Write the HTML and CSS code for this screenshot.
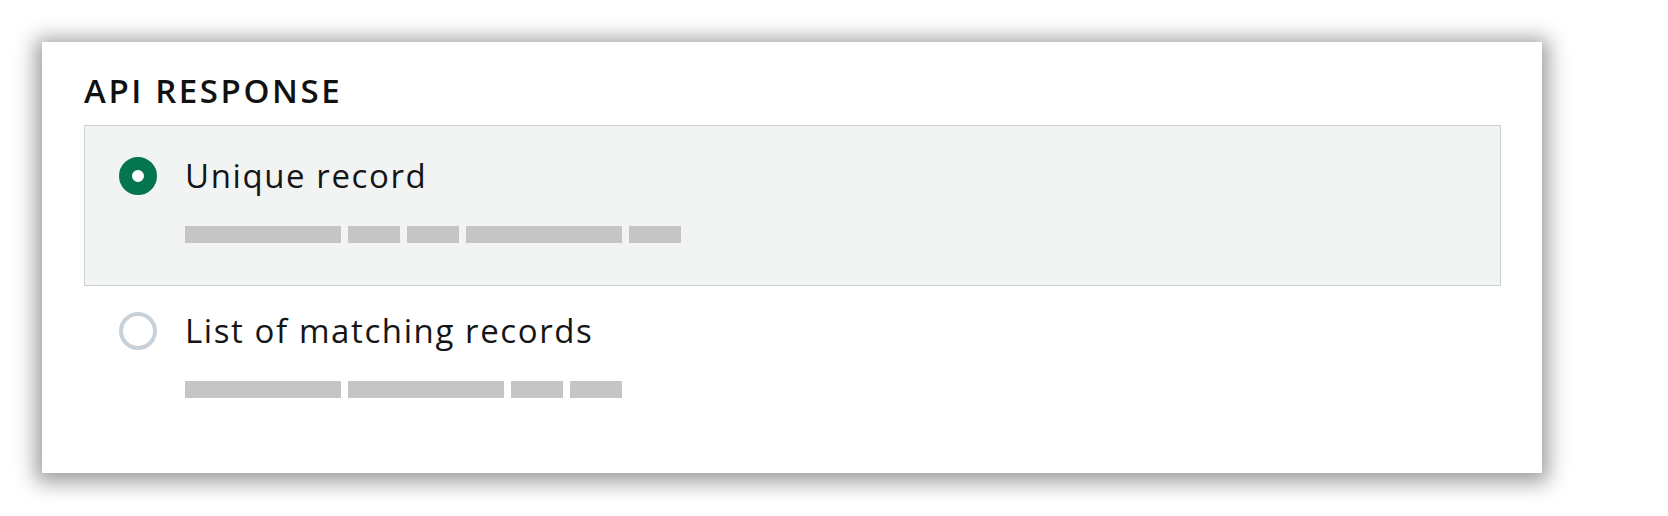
FILE: index.html
```html
<!DOCTYPE html>
<html>
<head>
  <title>API Response</title>
  <link rel="stylesheet" href="styles.css">
</head>
<body>
  <div class="panel">
    <h2 class="panel-title">API RESPONSE</h2>

    <!-- Opciones de respuesta -->
    <div class="option option-selected">
      <span class="radio radio-on"></span>
      <div class="option-body">
        <div class="option-label">Unique record</div>
        <div class="skeleton">
          <span class="bar bar-long"></span>
          <span class="bar bar-short"></span>
          <span class="bar bar-short"></span>
          <span class="bar bar-long"></span>
          <span class="bar bar-short"></span>
        </div>
      </div>
    </div>

    <div class="option">
      <span class="radio"></span>
      <div class="option-body">
        <div class="option-label">List of matching records</div>
        <div class="skeleton">
          <span class="bar bar-long"></span>
          <span class="bar bar-long"></span>
          <span class="bar bar-short"></span>
          <span class="bar bar-short"></span>
        </div>
      </div>
    </div>
  </div>
</body>
</html>
```

FILE: styles.css
```css
body {
  margin: 0;
  padding: 42px 0 43px 42px;
  background-color: #ffffff;
  font-family: "Open Sans", Arial, sans-serif;
  color: #151515;
}
.panel {
  box-sizing: border-box;
  width: 1500px;
  padding: 29px 41px 32px 42px;
  background-color: #ffffff;
  box-shadow: 0 3px 20px 6px rgba(0, 0, 0, 0.4);
}
.panel-title {
  margin: 0 0 14px 0;
  font-size: 33px;
  line-height: 40px;
  font-weight: 600;
  letter-spacing: 2.6px;
  color: #111111;
}
.option {
  display: flex;
  align-items: flex-start;
  gap: 28px;
  padding: 25px 40px 42px 34px;
  border: 1px solid transparent;
}
.option-selected {
  padding-top: 31px;
  background-color: #f2f4f3;
  border-color: #cbd0d4;
}
.radio {
  box-sizing: border-box;
  flex: none;
  width: 38px;
  height: 38px;
  border-radius: 50%;
  border: 4px solid #c9d1d8;
  background-color: #ffffff;
}
.radio-on {
  border: 13px solid #037650;
}
.option-label {
  font-size: 33px;
  line-height: 38px;
  letter-spacing: 1.6px;
}
.skeleton {
  display: flex;
  gap: 7px;
  margin-top: 31px;
}
.bar {
  height: 17px;
  background-color: #c5c5c5;
}
.bar-long {
  width: 156px;
}
.bar-short {
  width: 52px;
}
```
